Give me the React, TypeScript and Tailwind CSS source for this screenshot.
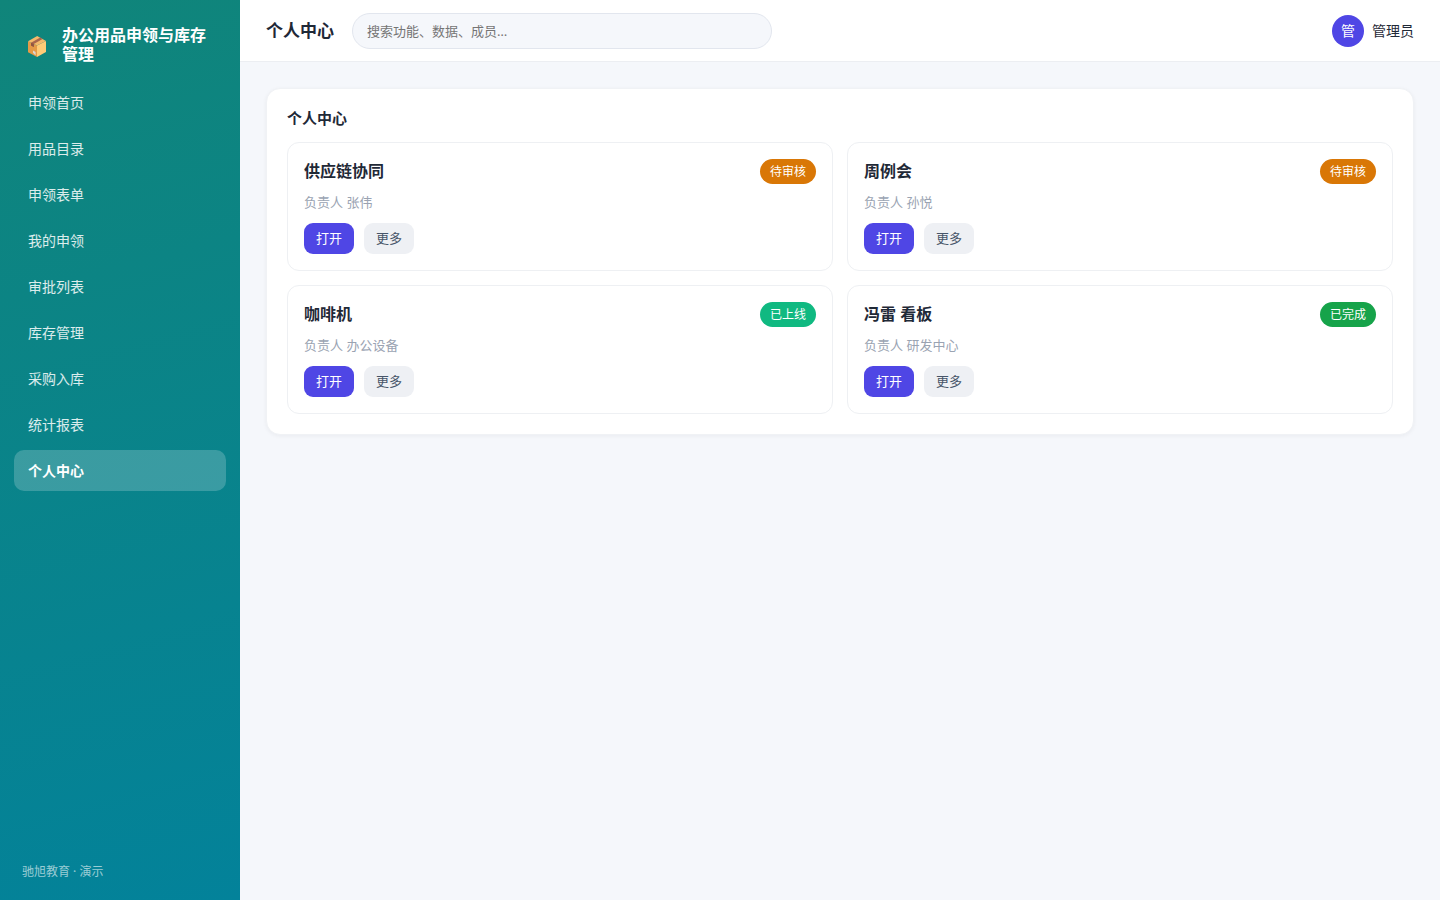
const navItems = [
  '申领首页',
  '用品目录',
  '申领表单',
  '我的申领',
  '审批列表',
  '库存管理',
  '采购入库',
  '统计报表',
  '个人中心',
];

const cards = [
  { title: '供应链协同', owner: '张伟', status: '待审核', color: 'bg-[#d97706]' },
  { title: '周例会', owner: '孙悦', status: '待审核', color: 'bg-[#d97706]' },
  { title: '咖啡机', owner: '办公设备', status: '已上线', color: 'bg-[#10b981]' },
  { title: '冯雷 看板', owner: '研发中心', status: '已完成', color: 'bg-[#16a34a]' },
];

function PackageIcon() {
  return (
    <svg viewBox="0 0 18 21" className="h-[21px] w-[18px]" aria-hidden="true">
      <path d="M0 5.2 9 9.6V21L0 16.2Z" fill="#e59a47" />
      <path d="M9 9.6 18 5v11L9 21Z" fill="#ffcb77" />
      <path d="M0 5.2 9.2 0 18 5 9 9.6Z" fill="#f5b96b" />
      <path d="M3 6.7 12.2 1.6 14.6 3 5.8 8.1V11L3 9.6Z" fill="#a9664c" />
      <path d="M3 6.7 5.8 8.1V11L3 9.6Z" fill="#8f5440" />
      <path d="M5 14.6 7.6 16v3.2L6.6 18.6 5 16.8Z" fill="#dcd6d2" />
    </svg>
  );
}

function Sidebar() {
  return (
    <aside className="flex w-60 shrink-0 flex-col bg-[linear-gradient(165deg,#10857a,#03829a)] px-[14px] pt-[26px] pb-[19px] text-white">
      <div className="flex items-center gap-[10px] px-2">
        <span className="flex w-[30px] shrink-0 justify-center pt-0.5">
          <PackageIcon />
        </span>
        <span className="text-[16px] leading-[19px] font-bold">办公用品申领与库存管理</span>
      </div>
      <nav className="mt-[18px] flex flex-col gap-[5px]">
        {navItems.map((item) => {
          const active = item === '个人中心';
          return (
            <a
              key={item}
              href="#"
              aria-current={active ? 'page' : undefined}
              className={
                active
                  ? 'flex h-[41px] items-center rounded-[10px] bg-white/20 px-[14px] text-[14px] font-bold text-white'
                  : 'flex h-[41px] items-center rounded-[10px] px-[14px] text-[14px] text-white/85'
              }
            >
              {item}
            </a>
          );
        })}
      </nav>
      <div className="mt-auto px-2 text-[12px] leading-[18px] text-white/60">驰旭教育 · 演示</div>
    </aside>
  );
}

function Topbar() {
  return (
    <header className="flex h-[62px] items-center gap-[18px] border-b border-[#eceef2] bg-white px-[26px]">
      <h1 className="text-[17px] leading-6 font-bold">个人中心</h1>
      <input
        type="search"
        aria-label="搜索"
        placeholder="搜索功能、数据、成员…"
        className="h-9 w-[420px] rounded-full border border-[#e2e6ee] bg-[#f5f7fb] px-[14px] text-[13px] outline-none placeholder:text-[#757575]"
      />
      <div className="ml-auto flex items-center gap-2 text-[14px]">
        <span className="flex size-8 items-center justify-center rounded-full bg-[#4f46e5] text-white">管</span>
        <span>管理员</span>
      </div>
    </header>
  );
}

export default function App() {
  return (
    <div className="flex min-h-screen bg-[#f5f7fb] font-['Noto_Sans','Noto_Sans_CJK_SC',sans-serif] text-[#1f2937]">
      <Sidebar />
      <div className="min-w-0 flex-1">
        <Topbar />
        <main className="p-[26px]">
          <section className="rounded-[14px] border border-[#f0f2f5] bg-white p-5 shadow-[0_1px_4px_rgba(15,23,42,0.05)]">
            <h2 className="text-[15px] leading-[19px] font-bold">个人中心</h2>
            <div className="mt-[14px] grid grid-cols-2 gap-[14px]">
              {cards.map((card) => (
                <article key={card.title} className="rounded-xl border border-[#eef0f3] p-4">
                  <div className="flex items-center justify-between">
                    <h3 className="text-[16px] leading-[25px] font-bold">{card.title}</h3>
                    <span className={`${card.color} rounded-full px-[10px] text-[12px] leading-[25px] text-white`}>
                      {card.status}
                    </span>
                  </div>
                  <p className="mt-2 text-[13px] leading-5 text-[#9aa3b2]">负责人 {card.owner}</p>
                  <div className="mt-[11px] flex gap-[10px]">
                    <button type="button" className="h-[31px] rounded-[9px] bg-[#4f46e5] px-3 text-[13px] text-white">
                      打开
                    </button>
                    <button type="button" className="h-[31px] rounded-[9px] bg-[#eef0f4] px-3 text-[13px] text-[#475569]">
                      更多
                    </button>
                  </div>
                </article>
              ))}
            </div>
          </section>
        </main>
      </div>
    </div>
  );
}
